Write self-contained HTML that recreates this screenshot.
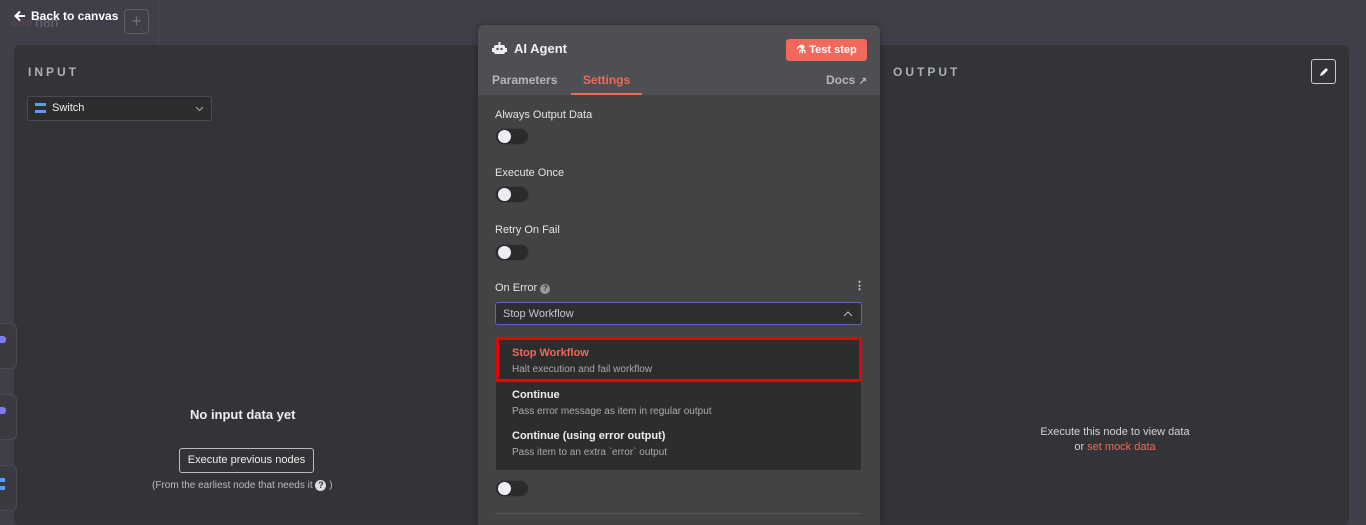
<!DOCTYPE html>
<html><head><meta charset="utf-8"><style>
*{box-sizing:border-box;margin:0;padding:0}
body{width:1366px;height:520px;overflow:hidden;background:#3f3f4a;font-family:"Liberation Sans",sans-serif;position:relative;color:#ddd}
.abs{position:absolute}
.panel{position:absolute;left:14px;top:45px;width:1335px;height:480px;background:#333437;border-radius:6px}
.lbl{font-size:12px;letter-spacing:3px;color:#aeb0b5;font-weight:bold}
.tog{position:absolute;width:34px;height:17px;border-radius:9px;background:#2a2b2d;border:1px solid #3b3c3e}
.tog:after{content:"";position:absolute;left:2px;top:1px;width:13px;height:13px;border-radius:50%;background:#eeeef2}
.fl{position:absolute;left:17px;font-size:11px;color:#e4e4e6}
.side{position:absolute;left:0;width:17px;height:46px;background:#3a3a40;border-radius:0 6px 6px 0;border:1px solid #4a4a55;border-left:none;z-index:2}
</style></head><body>
<div class="abs" style="left:158px;top:0;width:1px;height:45px;background:#4a4a55"></div>
<div class="abs" style="left:10px;top:14px;font-size:12px;color:#7e4a62">○○○ <span style="color:#6a6a74;font-size:14px">n8n</span></div>
<svg class="abs" style="left:14px;top:10px" width="12" height="12" viewBox="0 0 12 12"><path d="M11 6H2M6 1.5L1.5 6 6 10.5" stroke="#fff" stroke-width="2" fill="none"/></svg>
<div class="abs" style="left:31px;top:9px;font-size:12px;font-weight:bold;color:#fff">Back to canvas</div>
<div class="abs" style="left:124px;top:9px;width:25px;height:25px;border:1px solid #5e5e68;border-radius:4px;color:#6e6e78;text-align:center;line-height:22px;font-size:18px">+</div>
<div class="panel"></div>
<div class="side" style="top:323px"><span class="abs" style="left:0;top:12px;width:6px;height:7px;background:#7b7cf0;border-radius:0 3px 3px 0"></span></div>
<div class="side" style="top:394px"><span class="abs" style="left:0;top:12px;width:6px;height:7px;background:#7b7cf0;border-radius:0 3px 3px 0"></span></div>
<div class="side" style="top:465px"><span class="abs" style="left:0;top:12px;width:5px;height:12px;border-top:4px solid #5b9cf5;border-bottom:4px solid #5b9cf5"></span></div>
<div class="abs lbl" style="left:28px;top:65px">INPUT</div>
<div class="abs" style="left:27px;top:96px;width:185px;height:25px;border:1px solid #4a4b4e;border-radius:3px;background:#2c2d2f;font-size:11px;color:#eee;padding:5px 0 0 24px">Switch<span class="abs" style="left:7px;top:6px;width:11px;height:10px;border-top:3px solid #5b9cf5;border-bottom:3px solid #5b9cf5"></span><svg class="abs" style="right:7px;top:9px" width="9" height="6" viewBox="0 0 9 6"><path d="M1 1l3.5 3.5L8 1" stroke="#aaa" fill="none"/></svg></div>
<div class="abs" style="left:190px;top:407px;font-size:13px;font-weight:bold;color:#eee">No input data yet</div>
<div class="abs" style="left:179px;top:448px;width:135px;height:25px;border:1px solid #bbb;border-radius:3px;font-size:11px;color:#eee;text-align:center;line-height:23px">Execute previous nodes</div>
<div class="abs" style="left:152px;top:480px;font-size:10px;color:#bbb">(From the earliest node that needs it <b style="display:inline-block;width:11px;height:11px;border-radius:50%;background:#ddd;color:#333;font-size:9px;text-align:center;line-height:11px">?</b> )</div>
<div class="abs lbl" style="left:893px;top:65px">OUTPUT</div>
<div class="abs" style="left:1311px;top:59px;width:25px;height:25px;border:1px solid #ccc;border-radius:3px"><svg class="abs" style="left:6px;top:6px" width="12" height="12" viewBox="0 0 12 12"><path d="M2 10l1-3 5-5 2 2-5 5z" fill="#fff"/></svg></div>
<div class="abs" style="left:1033px;top:425px;font-size:11px;color:#d4d4d8;text-align:center;width:164px;line-height:15px">Execute this node to view data<br>or <span style="color:#ef6a55">set mock data</span></div>
<div class="abs" style="left:478px;top:25px;width:402px;height:500px;background:#424345;border-radius:6px 6px 0 0;box-shadow:0 0 8px rgba(0,0,0,.3)">
 <div class="abs" style="left:0;top:0;width:402px;height:70px;background:#4e4f52;border-radius:6px 6px 0 0"></div>
 <svg class="abs" style="left:14px;top:17px" width="15" height="13" viewBox="0 0 15 13"><rect x="2" y="3" width="11" height="9" rx="2" fill="#eee"/><rect x="6.5" y="0" width="2" height="3" fill="#eee"/><rect x="0" y="6" width="2" height="4" fill="#eee"/><rect x="13" y="6" width="2" height="4" fill="#eee"/><circle cx="5.5" cy="7" r="1.2" fill="#4e4f52"/><circle cx="9.5" cy="7" r="1.2" fill="#4e4f52"/></svg>
 <div class="abs" style="left:36px;top:16px;font-size:13px;font-weight:bold;color:#f0f0f2">AI Agent</div>
 <div class="abs" style="left:308px;top:14px;width:81px;height:22px;background:#f2685a;border-radius:3px;color:#fff;font-size:11px;font-weight:bold;text-align:center;line-height:22px">⚗ Test step</div>
 <div class="abs" style="left:14px;top:48px;font-size:12px;font-weight:bold;color:#b5b7ba">Parameters</div>
 <div class="abs" style="left:93px;top:46px;width:71px;height:24px;border-bottom:2px solid #ef6a55;font-size:12px;font-weight:bold;color:#ef6a55;text-align:center;padding-top:2px">Settings</div>
 <div class="abs" style="left:348px;top:48px;font-size:12px;font-weight:bold;color:#b5b7ba">Docs <span style="font-size:10px">↗</span></div>
 <div class="fl" style="top:84px">Always Output Data</div><div class="tog" style="left:17px;top:103px"></div>
 <div class="fl" style="top:142px">Execute Once</div><div class="tog" style="left:17px;top:161px"></div>
 <div class="fl" style="top:199px">Retry On Fail</div><div class="tog" style="left:17px;top:219px"></div>
 <div class="fl" style="top:257px">On Error <b style="display:inline-block;width:10px;height:10px;border-radius:50%;background:#999;color:#424345;font-size:8px;text-align:center;line-height:10px">?</b></div>
 <div class="abs" style="left:376px;top:254px;color:#ccc;font-size:11px;font-weight:bold">⋮</div>
 <div class="abs" style="left:17px;top:277px;width:367px;height:23px;border:1px solid #6a5fc2;border-radius:3px;background:#2d2e30;font-size:11px;color:#c8c8cc;padding:5px 0 0 7px">Stop Workflow<svg class="abs" style="right:8px;top:8px" width="10" height="6" viewBox="0 0 10 6"><path d="M1 5l4-4 4 4" stroke="#bbb" fill="none"/></svg></div>
 <div class="abs" style="left:17px;top:312px;width:367px;height:134px;background:#2c2d2f;border:1px solid #444;border-radius:3px"></div>
 <div class="abs" style="left:18px;top:312px;width:366px;height:45px;border:3px solid #e8000d"></div>
 <div class="abs" style="left:34px;top:322px;font-size:11px;font-weight:bold;color:#ef6a55">Stop Workflow</div>
 <div class="abs" style="left:34px;top:339px;font-size:10px;color:#aaa">Halt execution and fail workflow</div>
 <div class="abs" style="left:34px;top:364px;font-size:11px;font-weight:bold;color:#eee">Continue</div>
 <div class="abs" style="left:34px;top:381px;font-size:10px;color:#aaa">Pass error message as item in regular output</div>
 <div class="abs" style="left:34px;top:405px;font-size:11px;font-weight:bold;color:#eee">Continue (using error output)</div>
 <div class="abs" style="left:34px;top:422px;font-size:10px;color:#aaa">Pass item to an extra `error` output</div>
 <div class="tog" style="left:17px;top:455px"></div>
 <div class="abs" style="left:17px;top:488px;width:367px;height:1px;background:#555"></div>
</div>
</body></html>
